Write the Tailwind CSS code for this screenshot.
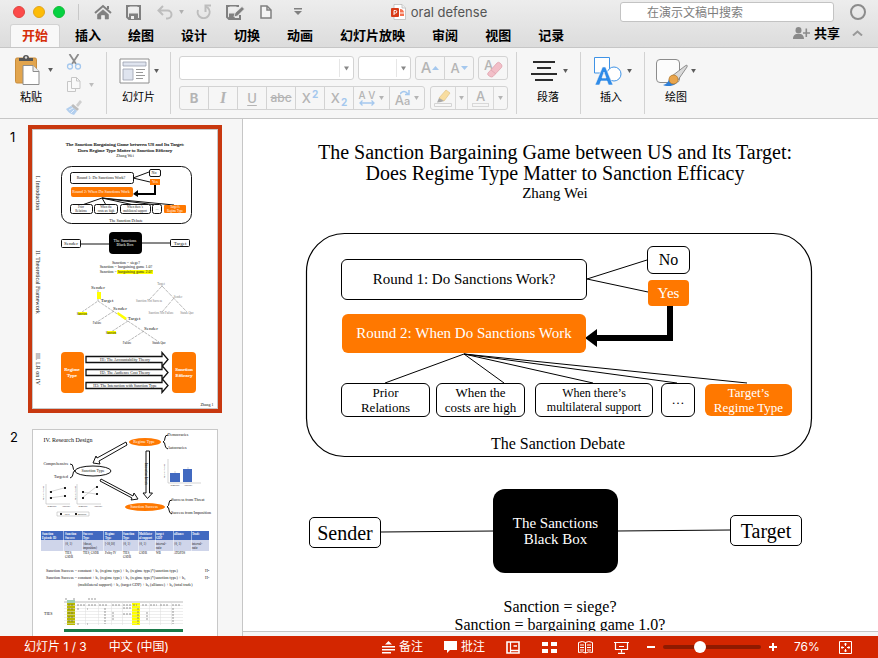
<!DOCTYPE html>
<html lang="zh-CN">
<head>
<meta charset="utf-8">
<meta name="viewport" content="width=device-width, initial-scale=1">
<title>oral defense</title>
<script src="https://cdn.jsdelivr.net/npm/@tailwindcss/browser@4"></script>
</head>
<body class="flex h-screen flex-col overflow-hidden bg-[#f6f6f6] font-['Inter','Noto_Sans_CJK_SC',sans-serif] text-black">

<!-- Shared symbols -->
<svg class="hidden">
  <symbol id="caret" viewBox="0 0 6 5"><path d="M0 0h6L3 5z" fill="currentColor"/></symbol>
</svg>

<!-- Title bar and tabs -->
<header class="shrink-0 border-b border-[#c6c6c6] bg-linear-to-b from-[#ededed] to-[#dcdcdc]">
  <div class="grid h-6 grid-cols-[1fr_auto_1fr] items-center">
    <div class="flex items-center pl-[13px] text-[#808080]">
      <div class="flex gap-2">
        <button aria-label="关闭" class="size-3 rounded-full border border-[#e0443e] bg-[#fc4a4a]"></button>
        <button aria-label="最小化" class="size-3 rounded-full border border-[#e2a51c] bg-[#fdbc06]"></button>
        <button aria-label="缩放" class="size-3 rounded-full border border-[#12bd36] bg-[#05d141]"></button>
      </div>
      <span class="mx-[13px] h-4 w-px bg-[#c8c8c8]"></span>
      <button aria-label="主页" class="ml-[2px]"><svg class="h-4 w-[18px]" viewBox="0 0 18 16" fill="none" stroke="currentColor"><path d="M1 9 9 2l8 7" stroke-width="2"/><path d="M3.500 10.500V15h3.500v-4h4v4h3.500v-4.500L9 5.800z" fill="currentColor" stroke-width=".6"/><path d="M7.500 11.500h3V16h-3z" fill="#ececec" stroke="none"/><path d="M14 5V2" stroke-width="2"/></svg></button>
      <button aria-label="保存" class="ml-[14px]"><svg class="size-[15px]" viewBox="0 0 15 15"><path d="M1 1h13v13H3l-2-2z" fill="none" stroke="currentColor" stroke-width="2"/><path d="M3.500 1.500h8v6h-8z" fill="#eee"/><path d="M3 8.500h9V14H3z" fill="currentColor"/><path d="M5 11h3v3H5z" fill="#eee"/></svg></button>
      <button aria-label="撤销" class="ml-4 text-[#bdbdbd]"><svg class="h-[15px] w-4" viewBox="0 0 16 15" fill="none" stroke="currentColor" stroke-width="2"><path d="M6 1 1.500 5.500 6 10M2 5.500h8.500a4 4 0 0 1 0 8H9"/></svg></button>
      <button aria-label="撤销选项" class="ml-[6px] text-[#b0b0b0]"><svg class="h-1 w-[5px]"><use href="#caret"/></svg></button>
      <button aria-label="重复" class="ml-[12px] text-[#bdbdbd]"><svg class="size-4" viewBox="0 0 16 16" fill="none" stroke="currentColor" stroke-width="2"><path d="M2 6a6 6 0 1 0 10-2L10 2.500"/><path d="M15 1.500H9.500V8"/></svg></button>
      <button aria-label="编辑" class="ml-[14px]"><svg class="h-[15px] w-[19px]" viewBox="0 0 19 15"><path d="M14 10v4H3l-2-2V1h12" fill="none" stroke="currentColor" stroke-width="2"/><path d="M3.500 1.500h7v5h-7z" fill="#eee"/><path d="M3 8.500h6V14H3z" fill="currentColor"/><path d="m8 12 1-4 7-6.500 2.500 2.500-7 7z" fill="currentColor" stroke="#eee" stroke-width=".8"/></svg></button>
      <button aria-label="新建" class="ml-[15px]"><svg class="h-[14px] w-3" viewBox="0 0 12 14" fill="#f4f4f4" stroke="currentColor" stroke-width="1.500"><path d="M1 1h6l4 4v8H1z"/><path d="M7 1v4h4" fill="none"/></svg></button>
      <button aria-label="自定义工具栏" class="ml-[22px]"><svg class="h-2 w-2" viewBox="0 0 8 8" fill="currentColor"><path d="M0 0h8v1.500H0zM0 3h8L4 7z"/></svg></button>
    </div>
    <div class="flex items-center gap-[5px] text-[13px] text-[#555]">
      <svg class="h-4 w-[15px]" viewBox="0 0 15 16"><path d="M3 .5h8l3.500 3.500v11.500H3z" fill="#fff" stroke="#bbb" stroke-width=".8"/><path d="M11 .5V4h3.500" fill="#eee" stroke="#bbb" stroke-width=".8"/><path d="M9 5a4 4 0 0 1 4 3.500H9zM9 9.500h4v2.500H9z" fill="#f5704f"/><rect y="4" width="8" height="9" rx="1" fill="#d83b17"/><path d="M3 11V6.500h1.500a1.300 1.300 0 0 1 0 2.600H3" fill="none" stroke="#fff"/></svg>
      <h1 class="whitespace-nowrap leading-6">oral defense</h1>
    </div>
    <div class="flex items-center justify-end gap-4 pr-3">
      <input type="search" aria-label="在演示文稿中搜索" placeholder="在演示文稿中搜索" class="h-5 w-[214px] rounded-[3px] border border-[#c3c3c3] bg-white pl-[26px] text-xs outline-none placeholder:text-[#7d7d7d]">
      <button aria-label="账户" class="size-4 rounded-full border-2 border-[#8c8c8c]"></button>
    </div>
  </div>
  <nav class="flex h-[23px] items-end pl-[10px] text-[13px] font-bold" aria-label="功能区">
    <div class="flex gap-[3px]">
      <button class="h-[23px] rounded-t-[3px] border-x border-t border-[#d2d2d2] bg-[#f8f8f8] px-[11px] text-[#d62e0a]">开始</button>
      <button class="h-[23px] px-3">插入</button>
      <button class="h-[23px] px-3">绘图</button>
      <button class="h-[23px] px-3">设计</button>
      <button class="h-[23px] px-3">切换</button>
      <button class="h-[23px] px-3">动画</button>
      <button class="h-[23px] px-3">幻灯片放映</button>
      <button class="h-[23px] px-3">审阅</button>
      <button class="h-[23px] px-3">视图</button>
      <button class="h-[23px] px-3">记录</button>
    </div>
    <div class="ml-auto flex items-center gap-3 pb-1 pr-[15px]">
      <button class="flex items-center gap-1 leading-5"><svg class="h-3 w-[17px]" viewBox="0 0 17 12" fill="#8a8a8a"><ellipse cx="5.500" cy="3.300" rx="3" ry="3.300"/><path d="M0 12c0-3.500 2-5 4-5h3c2 0 4 1.500 4 5zM12.500 1.500h1.600v3.700H17v1.600h-2.900V10h-1.600V6.800H10V5.200h2.500z"/></svg>共享</button>
      <button aria-label="折叠功能区"><svg class="h-[6px] w-[11px]" viewBox="0 0 11 6" fill="none" stroke="#999" stroke-width="2"><path d="m1 5.500 4.500-4 4.500 4"/></svg></button>
    </div>
  </nav>
</header>

<!-- Ribbon -->
<section aria-label="开始" class="flex h-[71px] shrink-0 items-center border-b border-[#c6c6c6] bg-[#f6f6f6] text-[11px] text-[#5c5c5c]">
  <div class="flex h-full w-[106px] pl-[15px] pt-[6px]">
    <div class="flex w-8 flex-col items-center">
      <button aria-label="粘贴" class="flex items-center gap-2 pl-[6px]">
        <svg class="h-[31px] w-[25px] shrink-0" viewBox="0 0 25 31"><rect x=".5" y="4" width="21" height="25" rx="1.500" fill="#e2a54e" stroke="#c98d3c"/><path d="M4 7V4h4a3 3 0 0 1 6 0h4v3z" fill="#555"/><circle cx="11" cy="3.500" r="1.200" fill="#ddd"/><path d="M8 11.500h10l6 6v13H8z" fill="#fff" stroke="#8d8d8d"/><path d="M18 11.500v6h6" fill="#eee" stroke="#8d8d8d"/></svg>
        <svg class="h-1 w-[5px] shrink-0"><use href="#caret"/></svg>
      </button>
      <span class="mt-1 leading-4 text-black">粘贴</span>
    </div>
    <div class="ml-[19px] flex flex-col gap-[7px]">
      <button aria-label="剪切"><svg class="size-4" viewBox="0 0 16 16" fill="none"><path d="M3.500 0 10 10M12.500 0 6 10" stroke="#8c8c8c" stroke-width="1.800"/><circle cx="4" cy="12.500" r="2.500" stroke="#a5c8ee" stroke-width="1.300"/><circle cx="12" cy="12.500" r="2.500" stroke="#a5c8ee" stroke-width="1.300"/></svg></button>
      <button aria-label="复制" class="flex items-center gap-[7px] text-[#bdbdbd]"><svg class="size-4" viewBox="0 0 16 16" fill="#f9f9f9" stroke="#c6c6c6"><path d="M1.500 4.500h8v10h-8z"/><path d="M5.500.5h5l3.500 3.500v7.500H5.500z"/><path d="M10.500.5V4H14" fill="none"/></svg><svg class="h-1 w-[5px]"><use href="#caret"/></svg></button>
      <button aria-label="格式刷"><svg class="size-4" viewBox="0 0 16 16"><path d="m10 5 4-5 2 2-4 5z" fill="#cfcfcf"/><path d="m7 4 6 5-2 2-6-5z" fill="#bdbdbd"/><path d="m5 6 6 5-3 4C4 14 2 12 0 9z" fill="#b3cfee"/><path d="m3 10 4-2M5 13l3-3" stroke="#e6effa"/></svg></button>
    </div>
  </div>
  <span class="h-[62px] w-px bg-[#d2d2d2]"></span>
  <div class="flex h-full w-[63px] flex-col pl-3 pt-[10px]">
    <button aria-label="幻灯片" class="flex items-center gap-1">
      <svg class="h-[26px] w-[31px] shrink-0" viewBox="0 0 31 26"><path d="M1 1h29v24H1z" fill="#fff" stroke="#8e8e8e"/><path d="M4 4h23v4H4zM4 11h10v11H4z" fill="#dfe4ef" stroke="#9aa0ad" stroke-width=".8"/><path d="M17 11.500h9m-9 3h7m-7 3h9m-9 3h7" stroke="#999"/></svg>
      <svg class="h-1 w-[5px]"><use href="#caret"/></svg>
    </button>
    <span class="ml-[3px] mt-[5px] leading-4 text-black">幻灯片</span>
  </div>
  <span class="h-[62px] w-px bg-[#d2d2d2]"></span>
  <div class="flex w-[345px] flex-col gap-[6px] pl-2 text-[#b4b4b4]">
    <div class="flex h-6 gap-1">
      <div class="relative w-[175px]">
        <select aria-label="字体" class="h-6 w-full appearance-none rounded-[3px] border border-[#d3d3d3] bg-white"><option></option></select>
        <svg class="pointer-events-none absolute right-[5px] top-[10px] h-[5px] w-[5px] text-[#888]"><use href="#caret"/></svg>
        <span class="absolute right-[14px] top-[3px] h-[18px] w-px bg-[#e6e6e6]"></span>
      </div>
      <div class="relative w-[53px]">
        <select aria-label="字号" class="h-6 w-full appearance-none rounded-[3px] border border-[#d3d3d3] bg-white"><option></option></select>
        <svg class="pointer-events-none absolute right-[5px] top-[10px] h-[5px] w-[5px] text-[#888]"><use href="#caret"/></svg>
        <span class="absolute right-[14px] top-[3px] h-[18px] w-px bg-[#e6e6e6]"></span>
      </div>
      <div class="flex w-[59px] divide-x divide-[#d3d3d3] rounded-[3px] border border-[#d3d3d3] font-medium">
        <button aria-label="增大字号" class="flex flex-1 items-center justify-center gap-[1px] text-[15px] leading-4">A<svg class="h-1 w-[7px]" viewBox="0 0 7 4"><path d="M0 4h7L3.500 0z" fill="#a5c8ee"/></svg></button>
        <button aria-label="减小字号" class="flex flex-1 items-center justify-center gap-[1px] text-[13px] leading-4">A<svg class="h-1 w-[7px]" viewBox="0 0 7 4"><path d="M0 0h7L3.500 4z" fill="#a5c8ee"/></svg></button>
      </div>
      <button aria-label="清除格式" class="relative flex w-[30px] items-start justify-start rounded-[3px] border border-[#d3d3d3] pl-[5px] text-[13px] font-medium leading-4">A<svg class="absolute bottom-[1px] right-1 h-[17px] w-4" viewBox="0 0 16 17"><path d="m1 12 9-10q1.500-1.500 3 0l1.500 1.500q1 1.500 0 3L6 15.500q-1.500 1-3 0L1 14q-.8-1 0-2z" fill="#f2bfc8" stroke="#dfa3ae" stroke-width=".8"/><path d="m4 9 5 4" stroke="#dfa3ae" stroke-width=".8"/></svg></button>
    </div>
    <div class="flex h-6 gap-[5px]">
      <div class="grid w-[246px] grid-cols-[29px_29px_29px_29px_29px_29px_36px_34px] grid-rows-[22px] divide-x divide-[#d3d3d3] rounded-[3px] border border-[#d3d3d3] text-[13px] font-medium leading-5">
        <button class="font-bold">B</button>
        <button class="font-['Liberation_Serif',serif] text-base font-bold italic leading-5">I</button>
        <button class="underline underline-offset-2">U</button>
        <button class="text-xs line-through">abc</button>
        <button aria-label="上标" class="flex items-center justify-center gap-[1px]">X<span class="pb-2 text-[10px] font-bold leading-3 text-[#a5c8ee]">2</span></button>
        <button aria-label="下标" class="flex items-center justify-center gap-[1px]">X<span class="pt-2 text-[10px] font-bold leading-3 text-[#a5c8ee]">2</span></button>
        <button aria-label="字符间距" class="flex items-center justify-center gap-1"><span class="flex flex-col items-center text-[10px] leading-[10px]">A V<svg class="h-[6px] w-4" viewBox="0 0 16 6" fill="none" stroke="#a5c8ee" stroke-width="1.300"><path d="M1 3h14M3.500.5 1 3l2.500 2.500M12.500.5 15 3l-2.500 2.500"/></svg></span><svg class="h-1 w-[5px]"><use href="#caret"/></svg></button>
        <button aria-label="更改大小写" class="relative flex items-center justify-center gap-1"><span class="pt-1">A<span class="text-[11px]">a</span></span><svg class="h-1 w-[5px]"><use href="#caret"/></svg><svg class="absolute left-[10px] top-[3px] h-[6px] w-[10px]" viewBox="0 0 10 6" fill="none" stroke="#a5c8ee" stroke-width="1.500"><path d="M0 4q4-5 8 0M9 0v4.500H5"/></svg></button>
      </div>
      <div class="grid w-[78px] grid-cols-[25px_12px_1fr_13px] divide-x divide-[#d8d8d8] rounded-[3px] border border-[#d3d3d3]">
        <button aria-label="突出显示颜色" class="flex items-center justify-center"><svg class="h-[18px] w-[18px]" viewBox="0 0 18 18"><path d="m5 9 7-8 4 3-6 8z" fill="#f8dda0" stroke="#e0c386" stroke-width=".7"/><path d="m5 9 5 3-3 1-4 .5z" fill="#aaa"/><path d="M.5 14.500h17v3H.5z" fill="#f7f7f7" stroke="#d4d4d4"/></svg></button>
        <button aria-label="突出显示选项" class="flex items-center justify-center"><svg class="h-1 w-[5px]"><use href="#caret"/></svg></button>
        <button aria-label="字体颜色" class="flex flex-col items-center justify-center text-[13px] font-medium leading-[14px]">A<span class="h-1 w-[17px] border border-[#d8d8d8]"></span></button>
        <button aria-label="字体颜色选项" class="flex items-center justify-center"><svg class="h-1 w-[5px]"><use href="#caret"/></svg></button>
      </div>
    </div>
  </div>
  <span class="h-[62px] w-px bg-[#d2d2d2]"></span>
  <div class="flex h-full w-[63px] flex-col pl-[14px] pt-[10px]">
    <button aria-label="段落" class="flex items-center gap-[6px]"><svg class="h-[26px] w-[26px] shrink-0" viewBox="0 0 26 26" stroke="#2b2b2b" stroke-width="2"><path d="M2 4h22M6 10h14M0 16h26M4 22h18"/></svg><svg class="h-1 w-[5px]"><use href="#caret"/></svg></button>
    <span class="ml-[6px] mt-[5px] leading-4 text-black">段落</span>
  </div>
  <span class="h-[62px] w-px bg-[#d2d2d2]"></span>
  <div class="flex h-full w-[63px] flex-col pl-[13px] pt-2">
    <button aria-label="插入" class="flex items-center gap-[5px]"><svg class="h-[30px] w-7 shrink-0" viewBox="0 0 28 30"><path d="M.5 1.500h15V17H.5z" fill="#fff" stroke="#3f93e6"/><circle cx="20" cy="18" r="7" fill="#fff" stroke="#3f93e6"/><path d="M1 29 8.500 11h3L19 29h-4.500l-1.500-4H7l-1.500 4zM8 22h4l-2-6z" fill="#2f8be8" stroke="#f6f6f6" stroke-width=".6"/></svg><svg class="h-1 w-[5px]"><use href="#caret"/></svg></button>
    <span class="ml-[6px] mt-[3px] leading-4 text-black">插入</span>
  </div>
  <span class="h-[62px] w-px bg-[#d2d2d2]"></span>
  <div class="flex h-full w-[63px] flex-col pl-[11px] pt-2">
    <button aria-label="绘图" class="flex items-center gap-[2px]"><svg class="h-[30px] w-[33px] shrink-0" viewBox="0 0 33 30"><rect x=".5" y="3.500" width="23" height="23" rx="3.500" fill="#fcfcfc" stroke="#8c8c8c"/><path d="m16 20 13-10q3-2 2 1l-9 13z" fill="#d9d9d9" stroke="#777" stroke-width=".8"/><path d="M7 29q5-1 6-6l8 4q-6 5-14 2z" fill="#2f7fd8"/><circle cx="17.500" cy="23.500" r="4.500" fill="#e9a54d" stroke="#b37a2c" stroke-width=".8"/></svg><svg class="h-1 w-[5px]"><use href="#caret"/></svg></button>
    <span class="ml-[9px] mt-[3px] leading-4 text-black">绘图</span>
  </div>
</section>

<div class="flex min-h-0 flex-1">
  <!-- Slide thumbnails -->
  <aside aria-label="幻灯片缩略图" class="w-[243px] shrink-0 overflow-hidden border-r border-[#c6c6c6] bg-[#f6f6f6] pt-[6px] text-[13px]">
    <div class="flex">
      <span class="w-7 pl-[10px] pt-1 leading-4">1</span>
      <div class="border-4 border-[#c8380f]">
        <svg class="block h-[280px] w-[186px]" viewBox="32 129 186 280" font-family="'Liberation Serif',serif" text-anchor="middle" fill="#111">
          <rect x="32.500" y="129.500" width="185" height="279" fill="#fff" stroke="#c8c8c8"/>
          <g font-size="5" stroke="#111" stroke-width=".15"><text x="125" y="146">The Sanction Bargaining Game between US and Its Target:</text><text x="125" y="152">Does Regime Type Matter to Sanction Efficacy</text></g>
          <text x="125" y="157" font-size="4">Zhang Wei</text>
          <g text-anchor="middle" font-size="6"><text transform="translate(36 193) rotate(90)">I. Introduction</text><text transform="translate(36 282) rotate(90)">II. Theoretical Framework</text><text transform="translate(36 369) rotate(90)">III. LR on IV</text></g>
          <g fill="#fff" stroke="#111">
            <rect x="61.500" y="166.500" width="130" height="57" rx="10"/>
            <rect x="70.500" y="172.500" width="63" height="11" rx="2"/><rect x="149.500" y="169.500" width="11" height="7" rx="1.500"/>
            <path d="m133 178 16-6M133 178l17 4M102 198l-20 7M102 198l4 7M102 198l32 7M102 198l54 7M102 198l72 7"/>
            <rect x="70.500" y="204.500" width="22" height="9" rx="2"/><rect x="94.500" y="204.500" width="23" height="9" rx="2"/><rect x="120.500" y="204.500" width="30" height="9" rx="2"/><rect x="152.500" y="204.500" width="9" height="9" rx="2"/>
            <path d="M80 244h30M142 243h29" /><rect x="61.500" y="239.500" width="19" height="8" rx="1"/><rect x="170.500" y="239.500" width="19" height="7" rx="1"/>
          </g>
          <g fill="#ff7800"><rect x="71" y="187" width="62" height="10" rx="2"/><rect x="150" y="179" width="10" height="6"/><rect x="164" y="205" width="22" height="8" rx="1"/><rect x="61" y="352" width="23" height="41" rx="4"/><rect x="172" y="352" width="24" height="41" rx="4"/></g>
          <path d="M155 185v9h-18" fill="none" stroke="#000" stroke-width="2"/><path d="m133 194 5-4v7z" fill="#000"/>
          <rect x="109" y="232" width="33" height="22" rx="4" fill="#000"/>
          <g font-size="4"><text x="101" y="179">Round 1: Do Sanctions Work?</text><text x="154" y="174">No</text><text x="126" y="222">The Sanction Debate</text><g fill="#fff"><text x="101" y="193">Round 2: When Do Sanctions Work</text><text x="155" y="183">Yes</text><text x="125" y="242">The Sanctions</text><text x="125" y="246">Black Box</text></g><text x="126" y="264">Sanction = siege?</text><text x="126" y="268">Sanction = bargaining game 1.0?</text></g>
          <rect x="117" y="270" width="36" height="4" fill="#ff0"/><text x="126" y="273" font-size="4">Sanction = bargaining game 2.0?</text>
          <g font-size="3"><text x="81" y="208">Prior</text><text x="81" y="212">Relations</text><text x="106" y="208">When the</text><text x="106" y="212">costs are high</text><text x="135" y="208">When there’s</text><text x="135" y="212">multilateral support</text><text x="157" y="210">…</text><g fill="#fff"><text x="175" y="208">Target’s</text><text x="175" y="212">Regime Type</text></g></g>
          <g font-size="5"><text x="71" y="245">Sender</text><text x="180" y="245">Target</text><text x="98" y="289">Sender</text><text x="107" y="302">Target</text><text x="120" y="310">Sender</text><text x="134" y="320">Target</text><text x="151" y="330">Sender</text></g>
          <g stroke="#888" stroke-width=".6" stroke-dasharray="3 1" fill="none"><path d="M98 290v11l-16 11M98 301l61 41M114 311l-17 11M128 321l-17 11M144 331l-17 11"/></g>
          <g stroke="#aaa" stroke-width=".8" stroke-dasharray="4 1" fill="none"><path d="m162 286-13 14M162 286l25 26M174 298l-12 14"/></g>
          <g fill="#ff0"><rect x="97" y="292" width="4" height="7"/><rect x="78" y="312" width="9" height="3"/><rect x="107" y="331" width="9" height="3"/><path d="m118 312 9 6-2 2-8-6z"/></g>
          <g font-size="3"><text x="82" y="315">Sanction</text><text x="97" y="324">Failure</text><text x="111" y="334">Sanction</text><text x="127" y="344">Failure</text><text x="159" y="344">Status Quo</text><g fill="#777"><text x="161" y="285">Target</text><text x="178" y="298">Sender</text><text x="149" y="302">Sanction Not Success</text><text x="161" y="314">Sanction Not Failure</text><text x="187" y="314">Status Quo</text></g></g>
          <g fill="#fff" stroke="#111" stroke-width="1.300"><path d="M86 356.500h76v-4l6 7-6 7v-4H86zM86 369.500h76v-4l6 7-6 7v-4H86zM86 382.500h76v-4l6 7-6 7v-4H86z"/></g>
          <g font-size="4"><text x="125" y="361">H1: The Accountability Theory</text><text x="125" y="374">H2: The Audience Cost Theory</text><text x="125" y="387">H3: The Interaction with Sanction Type</text></g>
          <g font-size="5" fill="#fff" stroke="#fff" stroke-width=".15"><text x="72" y="371">Regime</text><text x="72" y="377">Type</text><text x="184" y="371">Sanction</text><text x="184" y="377">Efficacy</text></g>
          <text x="207" y="406" font-size="4">Zhang 1</text>
        </svg>
      </div>
    </div>
    <div class="mt-4 flex">
      <span class="w-8 pl-[10px] leading-4">2</span>
      <svg class="block h-[280px] w-[186px]" viewBox="32 429 186 280" font-family="'Liberation Serif',serif" text-anchor="middle" fill="#111">
        <rect x="32.500" y="429.500" width="185" height="279" fill="#fff" stroke="#c8c8c8"/>
        <text x="68" y="442" font-size="6">IV. Research Design</text>
        <g fill="#ff7800"><ellipse cx="145" cy="442" rx="16" ry="4"/><ellipse cx="145" cy="507" rx="20" ry="4"/></g>
        <ellipse cx="93" cy="471" rx="18" ry="5" fill="#fff" stroke="#111"/>
        <g font-size="4"><text x="144" y="443" fill="#fff">Regime Type</text><text x="144" y="508" fill="#fff">Sanction Success</text><text x="93" y="472">Sanction Type</text><text x="178" y="436">Democracies</text><text x="177" y="449">Autocracies</text><text x="56" y="465">Comprehensive</text><text x="61" y="478">Targeted</text><text x="188" y="501">Success from Threat</text><text x="191" y="514">Success from Imposition</text></g>
        <g fill="none" stroke="#111"><path d="M168 435q-3 0-3 3t-2 4q2 0 2 3t3 4M70 464q3 0 3 3t2 4q-2 0-2 3t-3 4M172 500q-3 0-3 3t-2 4q2 0 2 3t3 4"/></g>
        <g fill="#fff" stroke="#111"><path d="m126 442-29 16-1-2-3 7 7 1-1-3 28-16zM101 479l32 17 1-3 4 6-7 1 1-2-32-17zM146 451v42h-3l4.500 5.500 5-5.500h-3v-42z"/></g>
        <text transform="translate(145 474) rotate(90)" font-size="3">Interaction Effects</text>
        <g fill="#4169c0"><rect x="170" y="473" width="10" height="9"/><rect x="183" y="469" width="9" height="13"/></g>
        <g stroke="#bbb" stroke-width=".6" fill="none"><path d="M168 459v24h33M175 471v2M188 467v2M46 484v20h24M77 484v20h24M49 492l15-4M49 498l15-2M82 492l14 2M82 498l14-11M57 512h32v4H57z"/></g>
        <g fill="#222"><path d="M50 491h2v2h-2zM64 487h2v2h-2zM50 497h2v2h-2zM64 495h2v2h-2zM82 491h2v2h-2zM96 493h2v2h-2zM82 497h2v2h-2zM96 486h2v2h-2zM60 513h2v2h-2zM75 513h2v2h-2z"/></g>
        <g font-size="2"><text x="175" y="486">Democracy</text><text x="188" y="486">Autocracy</text><text x="52" y="507">Democracy</text><text x="66" y="507">Autocracy</text><text x="83" y="507">Democracy</text><text x="98" y="507">Autocracy</text><text x="67" y="515">Threat</text><text x="82" y="515">Imposition</text><text transform="translate(165 471) rotate(-90)">Sanction Success</text><text transform="translate(44 493) rotate(-90)">Sanction Success</text><text transform="translate(76 493) rotate(-90)">Sanction Success</text></g>
        <rect x="41" y="531" width="168" height="9" fill="#4169c0"/><rect x="41" y="540" width="168" height="11" fill="#cfd5ea"/><path d="M63.500 531v20M82.500 531v20M103.500 531v20M122.500 531v20M138.500 531v20M155.500 531v20M173.500 531v20M191.500 531v20" stroke="#fff" stroke-width=".5"/>
        <g font-size="3" text-anchor="start"><g fill="#fff" font-weight="bold"><text x="42" y="535">Sanction</text><text x="42" y="539">Episode ID</text><text x="65" y="535">Sanction</text><text x="65" y="539">Success</text><text x="83" y="535">Success</text><text x="83" y="539">Type</text><text x="105" y="535">Regime</text><text x="105" y="539">Type</text><text x="123" y="535">Sanction</text><text x="123" y="539">Type</text><text x="139" y="535">Multilater</text><text x="139" y="539">al support</text><text x="156" y="535">target</text><text x="156" y="539">GDP</text><text x="174" y="535">alliance</text><text x="192" y="535">Trade</text></g>
          <text x="65" y="545">{0, 1}</text><text x="83" y="545">{threat,</text><text x="83" y="549">imposition}</text><text x="105" y="545">[-10,10]</text><text x="123" y="545">{0, 1}</text><text x="139" y="545">{0, 1}</text><text x="156" y="545">interval-</text><text x="156" y="549">ratio</text><text x="174" y="545">{0, 1}</text><text x="192" y="545">interval-</text><text x="192" y="549">ratio</text>
          <text x="65" y="554">TIES,</text><text x="65" y="558">GSDB</text><text x="83" y="554">TIES, GSDB</text><text x="105" y="554">Polity IV</text><text x="123" y="554">TIES,</text><text x="123" y="558">GSDB</text><text x="139" y="554">GSDB</text><text x="156" y="554">WB</text><text x="174" y="554">ATOPDS</text></g>
        <g font-size="4" text-anchor="start"><text x="46" y="572">Sanction Success = constant + b₁ (regime type) + b₂ (regime type)*(sanction type)</text><text x="46" y="579">Sanction Success = constant + b₁ (regime type) + b₂ (regime type)*(sanction type) + b₃</text><text x="78" y="586">(multilateral support) + b₄ (target GDP) + b₅ (alliance) + b₆ (total trade)</text><text x="205" y="572">H²</text><text x="205" y="579">H³</text><text x="44" y="615">TIES</text></g>
        <path d="M64 601h119v31H64z" fill="#fff"/><path d="M67 603h8v22h-8zM132 603h8v22h-8z" fill="#ff0"/><path d="M67 603h8v22h-8z" fill="#b9b900"/><path d="M64 601h119v2H64z" fill="#ddd"/><path d="M67 600h8v3h-8z" fill="#9fcfb5"/>
        <path d="M64 605.500h119M64 608.500h119M64 611.500h119M64 614.500h119M64 617.500h119M64 620.500h119M64 623.500h119M85.500 603v22M98.500 603v22M111.500 603v22M122.500 603v22M149.500 603v22M160.500 603v22M171.500 603v22" stroke="#ddd" stroke-width=".5"/>
        <path d="M68 605h6M77 605h8M88 605h8M99 605h9M112 605h8M123 605h8M133 605h4M142 605h5M150 605h7M160 605h8M172 605h8M68 609h6M77 609h3M68 613h6M68 617h6M68 621h6M87 609h1M105 608v16M138 608v16M123 608h9M123 614h8M77 624h3M87 624h1M113 612v8M147 612v8M173 608v16M65 599h2M73 599h3M88 599h9" stroke="#555" stroke-dasharray="2 1" stroke-width=".6" fill="none"/>
        <path d="M64 629h119v3H64z" fill="#1b7a4a"/>
      </svg>
    </div>
  </aside>

  <!-- Slide editing area -->
  <main class="flex min-w-0 flex-1 flex-col">
    <div class="relative min-h-0 flex-1 overflow-hidden border-b border-[#c6c6c6] bg-white text-center font-['Liberation_Serif',serif]">
      <svg class="absolute left-0 top-0 h-[500px] w-[620px]" viewBox="0 0 620 500" fill="none" stroke="#000">
        <rect x="63.500" y="114.500" width="505" height="223" rx="38" stroke-width="1.200"/>
        <path d="m344 160 60-19M344 160l61 13M221 235l-79 29M221 235l40 29M221 235l129 29M221 235l213 29M221 235l283 29M138 413l113-1M374 412l113-1"/>
        <path d="M427 187v32h-74" stroke-width="6"/><path d="m342 219 12-9v18z" fill="#000" stroke="none"/>
      </svg>
      <div class="absolute left-[62px] top-[23px] w-[500px]">
        <h2 class="text-xl leading-[21px]">The Sanction Bargaining Game between US and Its Target:<br>Does Regime Type Matter to Sanction Efficacy</h2>
        <p class="text-[15px] leading-[18px]">Zhang Wei</p>
      </div>
      <div class="absolute left-[98px] top-[140px] flex h-[41px] w-[246px] items-center justify-center rounded-md border border-black bg-white text-[15px]">Round 1: Do Sanctions Work?</div>
      <div class="absolute left-[404px] top-[127px] flex h-7 w-[43px] items-center justify-center rounded-md border border-black bg-white text-base">No</div>
      <div class="absolute left-[405px] top-[161px] flex h-[26px] w-[41px] items-center justify-center rounded-sm bg-[#ff7800] text-[15px] text-white">Yes</div>
      <div class="absolute left-[99px] top-[195px] flex h-[39px] w-[244px] items-center justify-center rounded-md bg-[#ff7800] text-[15px] text-white">Round 2: When Do Sanctions Work</div>
      <div class="absolute left-[98px] top-[264px] flex h-[34px] w-[89px] items-center justify-center rounded-md border border-black bg-white text-[13px] leading-[15px]">Prior<br>Relations</div>
      <div class="absolute left-[193px] top-[264px] flex h-[34px] w-[89px] items-center justify-center rounded-md border border-black bg-white text-[13px] leading-[15px]">When the<br>costs are high</div>
      <div class="absolute left-[292px] top-[264px] flex h-[34px] w-[118px] items-center justify-center rounded-md border border-black bg-white text-xs leading-[14px]">When there’s<br>multilateral support</div>
      <div class="absolute left-[418px] top-[264px] flex h-[34px] w-[34px] items-center justify-center rounded-md border border-black bg-white text-[13px]">…</div>
      <div class="absolute left-[462px] top-[265px] flex h-8 w-[87px] items-center justify-center rounded-md bg-[#ff7800] text-[13px] leading-[15px] text-white">Target’s<br>Regime Type</div>
      <p class="absolute left-[235px] top-[315px] w-40 text-base leading-5">The Sanction Debate</p>
      <div class="absolute left-[66px] top-[398px] flex h-[31px] w-[72px] items-center justify-center rounded-[5px] border border-black bg-white text-xl">Sender</div>
      <div class="absolute left-[250px] top-[370px] flex h-[84px] w-[125px] items-center justify-center rounded-xl bg-black text-[15px] leading-4 text-white">The Sanctions<br>Black Box</div>
      <div class="absolute left-[487px] top-[396px] flex h-[31px] w-[72px] items-center justify-center rounded-[5px] border border-black bg-white text-xl">Target</div>
      <p class="absolute left-[167px] top-[479px] w-[300px] text-base leading-[18px]">Sanction = siege?<br>Sanction = bargaining game 1.0?</p>
    </div>
    <div class="h-1 shrink-0 bg-[#f6f6f6]"></div>
  </main>
</div>

<!-- Status bar -->
<footer class="flex h-[22px] shrink-0 items-center bg-[#d32600] pl-6 pr-[26px] text-xs leading-4 text-white">
  <span>幻灯片 1 / 3</span>
  <button class="ml-[22px]">中文 (中国)</button>
  <div class="ml-auto flex items-center">
    <button class="flex items-center gap-1"><svg class="size-[13px]" viewBox="0 0 13 13" fill="#fff"><path d="M6.500 0 10 3.500H3zM0 5h13v1.500H0zM0 8h13v1.500H0zM0 11h9v1.500H0z"/></svg>备注</button>
    <button class="ml-[21px] flex items-center gap-1"><svg class="h-3 w-[13px]" viewBox="0 0 13 12" fill="#fff"><path d="M0 0h13v9H6l-3 3V9H0z"/></svg>批注</button>
    <button aria-label="普通视图" class="ml-[21px]"><svg class="h-[13px] w-[14px]" viewBox="0 0 14 13" fill="none" stroke="#fff"><path d="M1 1h12v11H1z" stroke-width="1.600"/><path d="M4.500 1v11" stroke-width="1.200"/><path d="M5 9.500h8M7.500 5h3.500" stroke-width="1.600"/></svg></button>
    <button aria-label="幻灯片浏览" class="ml-[22px]"><svg class="h-3 w-[15px]" viewBox="0 0 15 12" fill="#fff"><path d="M0 1h6v4H0zM9 1h6v4H9zM0 8h6v4H0zM9 8h6v4H9z"/></svg></button>
    <button aria-label="阅读视图" class="ml-[21px]"><svg class="h-[13px] w-[15px]" viewBox="0 0 15 13" fill="none" stroke="#fff"><path d="M.5 1.500q4-2 7 0 3-2 7 0v10q-4-1.500-7 .5-3-2-7-.5zM7.500 1.500V12M2 4h4M2 6.500h4M2 9h4M9 4h4M9 6.500h4M9 9h4"/></svg></button>
    <button aria-label="幻灯片放映" class="ml-[21px]"><svg class="h-[13px] w-[15px]" viewBox="0 0 15 13" fill="none" stroke="#fff" stroke-width="1.200"><path d="M0 1.500h15M1.500 2v6.500h12V2M7.500 8.500v3M4 12.400h7M5 5.500h5"/></svg></button>
    <button aria-label="缩小" class="ml-[18px] h-2 w-2"><svg class="size-2" viewBox="0 0 8 8"><path d="M0 3h8v2H0z" fill="#fff"/></svg></button>
    <input type="range" aria-label="缩放级别" min="0" max="100" value="36" class="mx-2 h-1 w-[98px] appearance-none rounded-full bg-[#8f1a00] [&::-webkit-slider-thumb]:size-3 [&::-webkit-slider-thumb]:appearance-none [&::-webkit-slider-thumb]:rounded-full [&::-webkit-slider-thumb]:bg-white">
    <button aria-label="放大" class="h-2 w-2"><svg class="size-2" viewBox="0 0 8 8"><path d="M0 3h8v2H0zM3 0h2v8H3z" fill="#fff"/></svg></button>
    <button class="ml-[17px] w-[27px] text-left">76%</button>
    <button aria-label="适应窗口" class="ml-[18px]"><svg class="size-[13px]" viewBox="0 0 13 13" fill="none" stroke="#fff"><path d="M.5.5h12v12H.5zM6.500 2v3M6.500 8v3M2 6.500h3M8 6.500h3M5.500 3.500l1-1.500 1 1.500M5.500 9.500l1 1.500 1-1.500M3.500 5.500 2 6.500l1.500 1M9.500 5.500l1.500 1-1.500 1"/></svg></button>
  </div>
</footer>
</body>
</html>
